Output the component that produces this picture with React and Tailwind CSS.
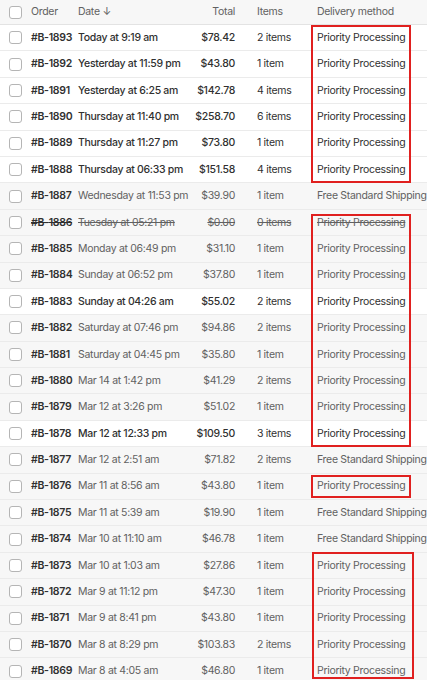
import React from 'react'

const orders = [
    { id: '1893', date: 'Today at 9:19 am', total: '$78.42', items: '2 items', method: 'Priority Processing', unread: true },
    { id: '1892', date: 'Yesterday at 11:59 pm', total: '$43.80', items: '1 item', method: 'Priority Processing', unread: true },
    { id: '1891', date: 'Yesterday at 6:25 am', total: '$142.78', items: '4 items', method: 'Priority Processing', unread: true },
    { id: '1890', date: 'Thursday at 11:40 pm', total: '$258.70', items: '6 items', method: 'Priority Processing', unread: true },
    { id: '1889', date: 'Thursday at 11:27 pm', total: '$73.80', items: '1 item', method: 'Priority Processing', unread: true },
    { id: '1888', date: 'Thursday at 06:33 pm', total: '$151.58', items: '4 items', method: 'Priority Processing', unread: true },
    { id: '1887', date: 'Wednesday at 11:53 pm', total: '$39.90', items: '1 item', method: 'Free Standard Shipping' },
    { id: '1886', date: 'Tuesday at 05:21 pm', total: '$0.00', items: '0 items', method: 'Priority Processing', cancelled: true },
    { id: '1885', date: 'Monday at 06:49 pm', total: '$31.10', items: '1 item', method: 'Priority Processing' },
    { id: '1884', date: 'Sunday at 06:52 pm', total: '$37.80', items: '1 item', method: 'Priority Processing' },
    { id: '1883', date: 'Sunday at 04:26 am', total: '$55.02', items: '2 items', method: 'Priority Processing', unread: true },
    { id: '1882', date: 'Saturday at 07:46 pm', total: '$94.86', items: '2 items', method: 'Priority Processing' },
    { id: '1881', date: 'Saturday at 04:45 pm', total: '$35.80', items: '1 item', method: 'Priority Processing' },
    { id: '1880', date: 'Mar 14 at 1:42 pm', total: '$41.29', items: '2 items', method: 'Priority Processing' },
    { id: '1879', date: 'Mar 12 at 3:26 pm', total: '$51.02', items: '1 item', method: 'Priority Processing' },
    { id: '1878', date: 'Mar 12 at 12:33 pm', total: '$109.50', items: '3 items', method: 'Priority Processing', unread: true },
    { id: '1877', date: 'Mar 12 at 2:51 am', total: '$71.82', items: '2 items', method: 'Free Standard Shipping' },
    { id: '1876', date: 'Mar 11 at 8:56 am', total: '$43.80', items: '1 item', method: 'Priority Processing' },
    { id: '1875', date: 'Mar 11 at 5:39 am', total: '$19.90', items: '1 item', method: 'Free Standard Shipping' },
    { id: '1874', date: 'Mar 10 at 11:10 am', total: '$46.78', items: '1 item', method: 'Free Standard Shipping' },
    { id: '1873', date: 'Mar 10 at 1:03 am', total: '$27.86', items: '1 item', method: 'Priority Processing' },
    { id: '1872', date: 'Mar 9 at 11:12 pm', total: '$47.30', items: '1 item', method: 'Priority Processing' },
    { id: '1871', date: 'Mar 9 at 8:41 pm', total: '$43.80', items: '1 item', method: 'Priority Processing' },
    { id: '1870', date: 'Mar 8 at 8:29 pm', total: '$103.83', items: '2 items', method: 'Priority Processing' },
    { id: '1869', date: 'Mar 8 at 4:05 am', total: '$46.80', items: '1 item', method: 'Priority Processing' },
]

// red annotation boxes drawn over the table
const marks = [
    'top-[25px] h-[158px] left-[311px] w-[100px]',
    'top-[214px] h-[233px] left-[311px] w-[100px]',
    'top-[475px] h-[23px] left-[311px] w-[100px]',
    'top-[552px] h-[127px] left-[312px] w-[102px]',
]

const Checkbox = () => (
    <div className="w-[13px] h-[13px] shrink-0 rounded-[3px] border border-[#b5b5b5] bg-white" />
)

const App = () => {
    return (
        <div className="relative w-[427px] h-[680px] overflow-hidden bg-white text-[10.5px] tracking-[-0.3px] text-[#303030]" style={{ fontFamily: 'Inter, "Noto Sans", sans-serif' }}>
            <div className="flex items-center h-[25px] bg-[#f7f7f7] border-b border-[#e3e3e3] text-[#616161] whitespace-nowrap">
                <div className="pl-[9px] w-[31px] shrink-0"><Checkbox /></div>
                <div className="w-[47px] shrink-0">Order</div>
                <div className="w-[102px] shrink-0">Date ↓</div>
                <div className="w-[55px] shrink-0 text-right">Total</div>
                <div className="w-[22px] shrink-0" />
                <div className="w-[60px] shrink-0">Items</div>
                <div className="shrink-0">Delivery method</div>
            </div>
            {orders.map((o) => {
                const strike = o.cancelled ? 'line-through' : ''
                const tone = o.unread ? 'text-[#303030]' : 'text-[#616161]'
                return (
                    <div
                        key={o.id}
                        className={`flex items-center h-[26.4px] border-b border-[#ebebeb] whitespace-nowrap ${o.unread ? 'bg-white' : 'bg-[#f7f7f7]'}`}
                    >
                        <div className="pl-[9px] w-[31px] shrink-0"><Checkbox /></div>
                        <div className={`w-[47px] shrink-0 font-semibold text-[#303030] ${strike}`}>#B-{o.id}</div>
                        <div className={`w-[102px] shrink-0 ${o.unread ? 'font-medium' : ''} ${tone} ${strike}`}>{o.date}</div>
                        <div className={`w-[55px] shrink-0 text-right ${o.unread ? 'font-medium' : ''} ${tone} ${strike}`}>{o.total}</div>
                        <div className="w-[22px] shrink-0" />
                        <div className={`w-[60px] shrink-0 ${tone} ${strike}`}>{o.items}</div>
                        <div className={`shrink-0 ${tone} ${strike}`}>{o.method}</div>
                    </div>
                )
            })}
            {marks.map((m, i) => (
                <div key={i} className={`absolute border-2 border-[#e0201f] ${m}`} />
            ))}
        </div>
    )
}

export default App
